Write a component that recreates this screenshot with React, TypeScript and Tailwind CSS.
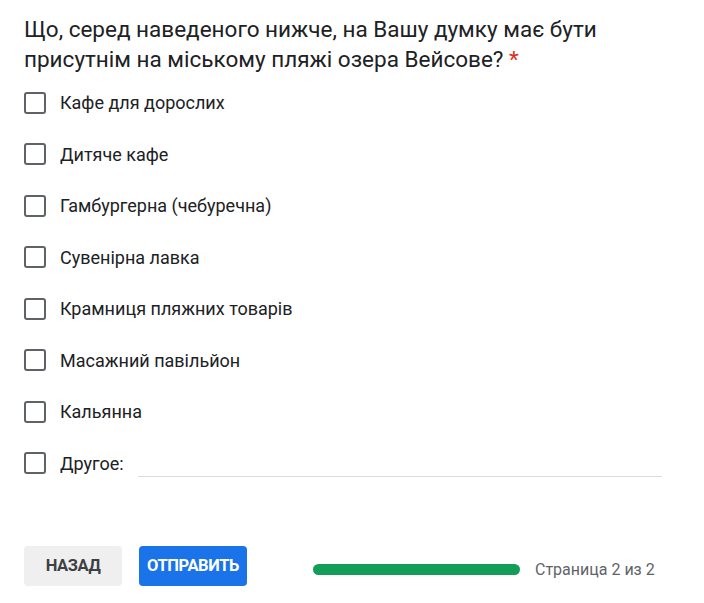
import React from "react";

const items = [
  "Кафе для дорослих",
  "Дитяче кафе",
  "Гамбургерна (чебуречна)",
  "Сувенірна лавка",
  "Крамниця пляжних товарів",
  "Масажний павільйон",
  "Кальянна",
];

function Box() {
  return <div className="w-[22px] h-[22px] border-2 border-[#5f6368] rounded-[3px] shrink-0" />;
}

export default function App() {
  return (
    <div className="w-[704px] h-[603px] bg-white font-['Roboto',sans-serif] pl-6 pt-[14px]">
      <div className="text-[22.5px] leading-[30px] text-[#202124] w-[640px]">
        Що, серед наведеного нижче, на Вашу думку має бути
        <br />
        присутнім на міському пляжі озера Вейсове?{" "}
        <span className="text-[#d93025]">*</span>
      </div>
      <div className="mt-[3px] flex flex-col">
        {items.map((t) => (
          <div key={t} className="flex items-center h-[51.5px]">
            <Box />
            <span className="ml-[14px] text-[18px] text-[#202124]">{t}</span>
          </div>
        ))}
        <div className="flex items-center h-[51.5px]">
          <Box />
          <span className="ml-[14px] text-[18px] text-[#202124]">Другое:</span>
          <div className="ml-[14px] w-[524px] border-b border-[#dadce0] self-start mt-[38px]" />
        </div>
      </div>
      <div className="flex items-center mt-[57px] pr-[48px]">
        <div className="w-[98px] h-[40px] rounded-[4px] bg-[#efefef] flex items-center justify-center font-['Roboto',sans-serif] font-bold text-[16.5px] tracking-[-0.4px] text-[#3c4043]">
          НАЗАД
        </div>
        <div className="ml-[17px] w-[108px] h-[40px] rounded-[4px] bg-[#1a73e8] flex items-center justify-center font-['Roboto',sans-serif] font-bold text-[16.5px] tracking-[-0.4px] text-white">
          ОТПРАВИТЬ
        </div>
        <div className="ml-[66px] w-[207px] h-[11px] rounded-full bg-[#129d58] mt-[6px]" />
        <div className="ml-[15px] text-[16px] text-[#5f6368] mt-[7px]">Страница 2 из 2</div>
      </div>
    </div>
  );
}
